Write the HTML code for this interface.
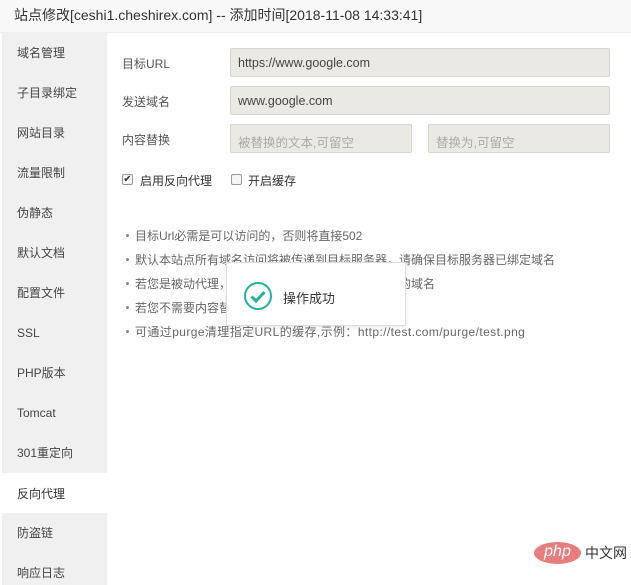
<!DOCTYPE html>
<html><head><meta charset="utf-8"><style>
*{margin:0;padding:0;box-sizing:border-box}
body{width:631px;height:585px;background:#fff;font-family:"Liberation Sans","Noto Sans CJK SC",sans-serif;font-size:12px;color:#555;position:relative;overflow:hidden}
.hd{position:absolute;left:0;top:0;width:631px;height:33px;background:#f8f8f8;border-bottom:1px solid #eee;font-size:14px;color:#333;padding:5px 0 0 14px}
.sb{position:absolute;left:2px;top:33px;width:105px;height:552px;background:#f0f0f0}
.sb div{position:absolute;left:15px;font-size:12px;color:#444;line-height:16px}
.act{position:absolute;left:2px;top:473px;width:105px;height:40px;background:#fff}
.lb{position:absolute;left:122px;color:#555}
.in{position:absolute;background:#eae9e4;border:1px solid #d6d6d0;border-radius:2px;height:29px;padding:7px 0 0 7px;color:#444;font-size:12.5px}
.ph{color:#aaa}
.bl{position:absolute;left:126px;font-size:12px;color:#666}
.bl:before{content:"";position:absolute;left:0;top:7px;width:3px;height:3px;background:#888;border-radius:50%}
.bl span{margin-left:9px}
.cb{position:absolute;width:11px;height:11px;border:1px solid #999;border-radius:2px;background:#f6f6f6}
</style></head><body>
<div class="hd">站点修改[ceshi1.cheshirex.com] -- 添加时间[2018-11-08 14:33:41]</div>
<div class="sb">
<div style="top:12px">域名管理</div>
<div style="top:52px">子目录绑定</div>
<div style="top:92px">网站目录</div>
<div style="top:132px">流量限制</div>
<div style="top:172px">伪静态</div>
<div style="top:212px">默认文档</div>
<div style="top:252px">配置文件</div>
<div style="top:292px">SSL</div>
<div style="top:332px">PHP版本</div>
<div style="top:372px">Tomcat</div>
<div style="top:412px">301重定向</div>
<div style="top:492px">防盗链</div>
<div style="top:532px">响应日志</div>
</div>
<div class="act"><div style="position:absolute;left:15px;top:12px;color:#333">反向代理</div></div>
<div class="lb" style="top:55px">目标URL</div>
<div class="lb" style="top:93px">发送域名</div>
<div class="lb" style="top:131px">内容替换</div>
<div class="in" style="left:230px;top:48px;width:380px">https://www.google.com</div>
<div class="in" style="left:230px;top:86px;width:380px">www.google.com</div>
<div class="in ph" style="left:230px;top:124px;width:182px">被替换的文本,可留空</div>
<div class="in ph" style="left:428px;top:124px;width:182px">替换为,可留空</div>
<div class="cb" style="left:122px;top:174px;font-size:10px;line-height:9px;color:#333;text-align:center">✔</div>
<div style="position:absolute;left:140px;top:172px;color:#333">启用反向代理</div>
<div class="cb" style="left:231px;top:174px"></div>
<div style="position:absolute;left:248px;top:172px;color:#333">开启缓存</div>
<div class="bl" style="top:227px"><span>目标Url必需是可以访问的，否则将直接502</span></div>
<div class="bl" style="top:251px"><span>默认本站点所有域名访问将被传递到目标服务器，请确保目标服务器已绑定域名</span></div>
<div class="bl" style="top:275px"><span>若您是被动代理，请在内容替换中填写目标服务器的域名</span></div>
<div class="bl" style="top:299px"><span>若您不需要内容替换，请留空</span></div>
<div class="bl" style="top:323px;letter-spacing:0.4px"><span>可通过purge清理指定URL的缓存,示例：http://test.com/purge/test.png</span></div>
<div style="position:absolute;left:226px;top:262px;width:180px;height:64px;background:#fff;border:1px solid #ddd;box-shadow:0 1px 4px rgba(0,0,0,.1)">
<svg style="position:absolute;left:16px;top:18px" width="30" height="30" viewBox="0 0 30 30"><circle cx="15" cy="15" r="13" fill="none" stroke="#20b29a" stroke-width="2"/><path d="M8.5 15.5l4.5 4.5 8.5-9" fill="none" stroke="#20b29a" stroke-width="3"/></svg>
<div style="position:absolute;left:56px;top:25px;font-size:13px;color:#333">操作成功</div>
</div>
<div style="position:absolute;left:534px;top:542px;width:47px;height:22px;background:#e77d7d;border-radius:50%;color:#fff;font-style:italic;font-size:16px;text-align:center;line-height:20px">php</div>
<div style="position:absolute;left:585px;top:543px;font-size:14px;color:#333">中文网</div>
</body></html>
